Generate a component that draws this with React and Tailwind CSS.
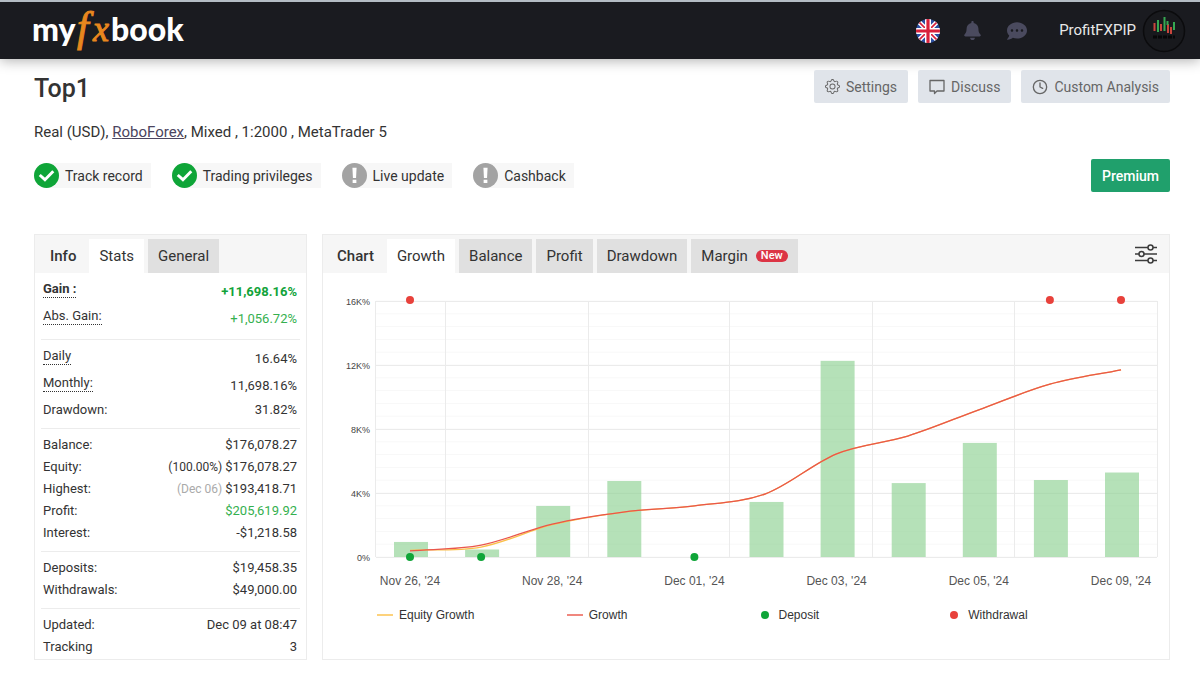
import { FaBell, FaCommentDots } from 'react-icons/fa';
import { BsGear } from 'react-icons/bs';
import { Clock } from 'lucide-react';

const badges = [
  { label: 'Track record', ok: true },
  { label: 'Trading privileges', ok: true },
  { label: 'Live update', ok: false },
  { label: 'Cashback', ok: false },
];

const statGroups = [
  {
    rows: [
      { label: 'Gain :', value: '+11,698.16%', hint: true, tall: true, bold: true, color: 'text-[#12a33a]' },
      { label: 'Abs. Gain:', value: '+1,056.72%', hint: true, tall: true, color: 'text-[#35b04f]' },
    ],
  },
  {
    rows: [
      { label: 'Daily', value: '16.64%', hint: true, tall: true },
      { label: 'Monthly:', value: '11,698.16%', hint: true, tall: true },
      { label: 'Drawdown:', value: '31.82%' },
    ],
  },
  {
    rows: [
      { label: 'Balance:', value: '$176,078.27' },
      { label: 'Equity:', note: '(100.00%)', value: '$176,078.27' },
      { label: 'Highest:', note: '(Dec 06)', muted: true, value: '$193,418.71' },
      { label: 'Profit:', value: '$205,619.92', color: 'text-[#35b04f]' },
      { label: 'Interest:', value: '-$1,218.58' },
    ],
  },
  {
    rows: [
      { label: 'Deposits:', value: '$19,458.35' },
      { label: 'Withdrawals:', value: '$49,000.00' },
    ],
  },
  {
    rows: [
      { label: 'Updated:', value: 'Dec 09 at 08:47' },
      { label: 'Tracking', value: '3' },
    ],
  },
];

// one entry per trading day, values in percent
const days = [
  { label: "Nov 26, '24", profit: 940, growth: 380, equity: 420, deposit: true, withdrawal: true },
  { profit: 470, growth: 740, equity: 620, deposit: true },
  { label: "Nov 28, '24", profit: 3190, growth: 2060, equity: 2020 },
  { profit: 4750, growth: 2810, equity: 2810 },
  { label: "Dec 01, '24", profit: 0, growth: 3200, equity: 3200, deposit: true },
  { profit: 3440, growth: 3950, equity: 3950 },
  { label: "Dec 03, '24", profit: 12260, growth: 6450, equity: 6450 },
  { profit: 4620, growth: 7560, equity: 7560 },
  { label: "Dec 05, '24", profit: 7130, growth: 9200, equity: 9200 },
  { profit: 4810, growth: 10800, equity: 10800, withdrawal: true },
  { label: "Dec 09, '24", profit: 5280, growth: 11698, equity: 11698, withdrawal: true },
];

const LEFT = 53;
const RIGHT = 834;
const TOP = 28;
const BOTTOM = 284;
const MAX = 16000;

const xAt = (i) => 87 + i * 71.1;
const yAt = (v) => BOTTOM - (v / MAX) * (BOTTOM - TOP);

function smoothPath(values) {
  const pts = values.map((v, i) => [xAt(i), yAt(v)]);
  const slope = pts.map((p, i) => {
    const a = pts[Math.max(i - 1, 0)];
    const b = pts[Math.min(i + 1, pts.length - 1)];
    return (b[1] - a[1]) / (b[0] - a[0]);
  });
  let d = `M${pts[0][0]} ${pts[0][1]}`;
  for (let i = 1; i < pts.length; i++) {
    const [x0, y0] = pts[i - 1];
    const [x1, y1] = pts[i];
    const h = (x1 - x0) / 3;
    d += ` C${x0 + h} ${y0 + slope[i - 1] * h} ${x1 - h} ${y1 - slope[i] * h} ${x1} ${y1}`;
  }
  return d;
}

function Logo() {
  return (
    <svg width="156" height="56" viewBox="0 0 156 56" role="img" aria-label="myfxbook" className="overflow-visible">
      <g fontFamily="Lato, sans-serif" fontWeight="900" fontSize="32" fill="#fff">
        <text x="-1" y="38">my</text>
        <text x="78" y="38">book</text>
      </g>
      <g fontFamily="'Liberation Serif', serif" fontStyle="italic" fill="#e8871e" stroke="#e8871e">
        <text x="44" y="38" fontSize="42">f</text>
        <text x="60" y="38" fontSize="36">x</text>
      </g>
    </svg>
  );
}

function Flag() {
  return (
    <svg width="24" height="24" viewBox="0 0 24 24">
      <clipPath id="flag-round"><circle cx="12" cy="12" r="12" /></clipPath>
      <g clipPath="url(#flag-round)">
        <path fill="#2b4fa2" d="M0 0h24v24H0z" />
        <path stroke="#fff" strokeWidth="4.5" d="M0 0l24 24M24 0L0 24" />
        <path stroke="#d8213b" strokeWidth="1.6" d="M0 0l24 24M24 0L0 24" />
        <path stroke="#fff" strokeWidth="6" d="M12 0v24M0 12h24" />
        <path stroke="#d8213b" strokeWidth="3.2" d="M12 0v24M0 12h24" />
      </g>
    </svg>
  );
}

function Avatar() {
  return (
    <svg width="44" height="44" viewBox="0 0 44 44">
      <circle cx="22" cy="22" r="20.5" fill="#18191d" stroke="#0b0b0d" strokeWidth="1.5" />
      <g strokeWidth="2">
        <path stroke="#c8453c" d="M12.500 14v8M19 15v7M26 15v9M29 18v7" />
        <path stroke="#36a852" d="M16 11v12M22.500 8v14M32 13v8M25.500 12v4" />
      </g>
      <path stroke="#070708" strokeWidth="3" strokeDasharray="4 1" d="M11 28h22" />
    </svg>
  );
}

function StatusIcon({ ok }) {
  return (
    <svg width="25" height="25" viewBox="0 0 24 24" className="shrink-0">
      <circle cx="12" cy="12" r="12" fill={ok ? '#0fa538' : '#a3a3a3'} />
      {ok ? (
        <path d="M5.500 11.500l5 4.500 8-8" fill="none" stroke="#fff" strokeWidth="2.800" />
      ) : (
        <path d="M10 4.500h4l-.5 10h-3zM10.200 16h3.600v3.200h-3.600z" fill="#fff" />
      )}
    </svg>
  );
}

function DiscussIcon() {
  return (
    <svg width="16" height="16" viewBox="0 0 16 16" fill="none" stroke="currentColor" strokeWidth="1.300" strokeLinejoin="round">
      <path d="M1 1.500h14v10.500H8l-2.500 2.500V12H1z" />
    </svg>
  );
}

function SlidersIcon() {
  return (
    <svg width="22" height="22" viewBox="0 0 22 22" fill="#f6f6f6" stroke="#3c3c3c" strokeWidth="1.500">
      <path d="M0 4.500h22M0 11h22M0 17.500h22" />
      <circle cx="15.500" cy="4.500" r="2.500" />
      <circle cx="6.500" cy="11" r="2.500" />
      <circle cx="15.500" cy="17.500" r="2.500" />
    </svg>
  );
}

function ActionButton({ icon, children }) {
  return (
    <button className="flex h-[33px] items-center gap-1.5 rounded-xs bg-[#e0e4ea] px-[11px] text-sm text-[#666]">
      {icon}
      {children}
    </button>
  );
}

function Tab({ active, children }) {
  return (
    <button
      role="tab"
      aria-selected={!!active}
      className={`flex h-[34px] items-center gap-2 px-2.5 text-[15px] text-[#333] ${active ? 'bg-white' : 'bg-[#e0e0e0]'}`}
    >
      {children}
    </button>
  );
}

function StatsPanel() {
  return (
    <section className="border border-[#ececec]">
      <div className="flex h-[38px] items-end bg-[#f6f6f6] pl-[15px]">
        <h2 className="mr-[13px] flex h-[34px] items-center text-[15px] font-medium text-[#333]">Info</h2>
        <div role="tablist" className="flex gap-1">
          <Tab active>Stats</Tab>
          <Tab>General</Tab>
        </div>
      </div>
      <div className="px-1.5 text-[13px] text-[#333]">
        {statGroups.map((group, i) => (
          <div key={i} className={`pt-[5px] ${i ? 'border-t border-[#ececec]' : ''} ${i < 4 ? 'pb-[7px]' : 'pb-px'}`}>
            <table className="w-full">
              <tbody>
                {group.rows.map((row) => (
                  <tr key={row.label} className={`${row.tall ? 'h-[27px]' : 'h-[22px]'} ${row.bold ? 'font-bold' : ''}`}>
                    <th scope="row" className={`p-0 pl-0.5 text-left leading-4 ${row.bold ? 'font-bold' : 'font-normal'}`}>
                      {row.hint ? (
                        <span className="mb-1 inline-block border-b border-dotted border-[#333]">{row.label}</span>
                      ) : row.label}
                    </th>
                    <td className={`p-0 pr-[3px] text-right leading-4 ${row.color || ''}`}>
                      {row.note && <span className={`text-xs ${row.muted ? 'text-[#aaa]' : ''}`}>{row.note} </span>}
                      {row.value}
                    </td>
                  </tr>
                ))}
              </tbody>
            </table>
          </div>
        ))}
      </div>
    </section>
  );
}

function GrowthChart() {
  const minor = Array.from({ length: 21 }, (_, i) => i * 800);
  const major = [0, 4000, 8000, 12000, 16000];
  return (
    <svg viewBox="0 0 846 320" className="block w-full" fontFamily="'Liberation Sans', Arial, sans-serif">
      {minor.map((v) => (
        <path key={v} d={`M${LEFT} ${yAt(v)}H${RIGHT}`} stroke="#f8f8f8" />
      ))}
      <g stroke="#ebebeb">
        {major.map((v) => (
          <path key={v} d={`M${LEFT} ${yAt(v) + 0.5}H${RIGHT}`} />
        ))}
        {[52.5, 122.5, 265.5, 406.5, 549.5, 691.5, 834.5].map((x) => (
          <path key={x} d={`M${x} ${TOP}V${BOTTOM}`} />
        ))}
      </g>
      {major.map((v) => (
        <text key={v} x="47" y={yAt(v) + 4} fontSize="9" fill="#444" textAnchor="end">
          {v ? `${v / 1000}K%` : '0%'}
        </text>
      ))}
      {days.map((d, i) => (
        <rect key={i} x={xAt(i) - 16} y={yAt(d.profit)} width="34" height={BOTTOM - yAt(d.profit)} fill="#8dd192" fillOpacity="0.65" />
      ))}
      <path d={smoothPath(days.map((d) => d.equity))} fill="none" stroke="#fbc04a" strokeWidth="1.300" />
      <path d={smoothPath(days.map((d) => d.growth))} fill="none" stroke="#e9564c" strokeWidth="1.300" />
      {days.map((d, i) => (
        <g key={i}>
          {d.deposit && <circle cx={xAt(i)} cy={BOTTOM} r="4" fill="#0fa538" />}
          {d.withdrawal && <circle cx={xAt(i)} cy={TOP - 1} r="4" fill="#e8413b" />}
          {d.label && (
            <text x={xAt(i)} y="312" fontSize="12" fill="#555" textAnchor="middle">{d.label}</text>
          )}
        </g>
      ))}
    </svg>
  );
}

function ChartPanel() {
  return (
    <section className="flex flex-col border border-[#ececec]">
      <div className="flex h-[38px] items-end bg-[#f6f6f6] pl-[14px]">
        <h2 className="mr-[13px] flex h-[34px] items-center text-[15px] font-medium text-[#333]">Chart</h2>
        <div role="tablist" className="flex gap-1">
          <Tab active>Growth</Tab>
          <Tab>Balance</Tab>
          <Tab>Profit</Tab>
          <Tab>Drawdown</Tab>
          <Tab>
            Margin
            <span className="rounded-full bg-[#dc3545] px-[5px] text-[11px] leading-3 font-medium text-white">New</span>
          </Tab>
        </div>
        <button aria-label="Chart options" className="mr-3 mb-2 ml-auto">
          <SlidersIcon />
        </button>
      </div>
      <GrowthChart />
      <ul className="grid grid-cols-4 pt-3.5 pr-[33px] pl-[54px] font-['Liberation_Sans',Arial,sans-serif] text-xs text-[#333]">
        <li className="flex items-center gap-1.5"><span className="h-0.5 w-4 bg-[#fdd27c]" />Equity Growth</li>
        <li className="flex items-center gap-1.5"><span className="h-0.5 w-4 bg-[#f0877e]" />Growth</li>
        <li className="flex items-center gap-2.5 pl-1"><span className="size-2 rounded-full bg-[#0fa538]" />Deposit</li>
        <li className="flex items-center gap-2.5 pl-1"><span className="size-2 rounded-full bg-[#e8413b]" />Withdrawal</li>
      </ul>
    </section>
  );
}

export default function App() {
  return (
    <div className="bg-white font-[Roboto,sans-serif] text-[#333]">
      <header className="flex h-[59px] items-center border-t-2 border-[#b4bcc4] bg-[#1a1b20] pr-3.5 pl-[33px] shadow-[0_2px_12px_rgba(0,0,0,0.3)]">
        <a href="#" className="mr-auto"><Logo /></a>
        <div className="flex items-center">
          <button aria-label="Language"><Flag /></button>
          <button aria-label="Notifications" className="ml-6 text-[#4a4a5e]"><FaBell className="h-[19px] w-[17px]" /></button>
          <button aria-label="Messages" className="ml-[26px] text-[#4a4a5e]"><FaCommentDots className="size-5" /></button>
          <a href="#" className="ml-8 flex items-center gap-1.5 text-[15px] text-[#e8e8e8]">
            ProfitFXPIP
            <Avatar />
          </a>
        </div>
      </header>

      <main className="pt-[11px] pr-[30px] pl-[34px]">
        <div className="flex items-center justify-between">
          <h1 className="pt-1 text-[25px] leading-7 font-medium">Top1</h1>
          <div className="flex gap-2.5">
            <ActionButton icon={<BsGear className="size-[15px]" />}>Settings</ActionButton>
            <ActionButton icon={<DiscussIcon />}>Discuss</ActionButton>
            <ActionButton icon={<Clock size={16} strokeWidth={2} />}>Custom Analysis</ActionButton>
          </div>
        </div>

        <p className="mt-[19px] text-[15px] leading-5">
          Real (USD), <a href="#" className="text-[#4b4560] underline">RoboForex</a>, Mixed , 1:2000 , MetaTrader 5
        </p>

        <div className="mt-[17px] flex h-[33px] items-center justify-between">
          <ul className="flex gap-[21px]">
            {badges.map((b) => (
              <li key={b.label} className="flex h-[25px] items-center gap-1.5 rounded-l-full bg-[#f7f7f7] pr-2 text-sm">
                <StatusIcon ok={b.ok} />
                {b.label}
              </li>
            ))}
          </ul>
          <button className="h-[33px] rounded-xs bg-[#20a06c] px-[11px] text-sm font-medium text-white">Premium</button>
        </div>

        <div className="mt-[42px] grid grid-cols-[273px_minmax(0,1fr)] gap-[15px]">
          <StatsPanel />
          <ChartPanel />
        </div>
      </main>
    </div>
  );
}
